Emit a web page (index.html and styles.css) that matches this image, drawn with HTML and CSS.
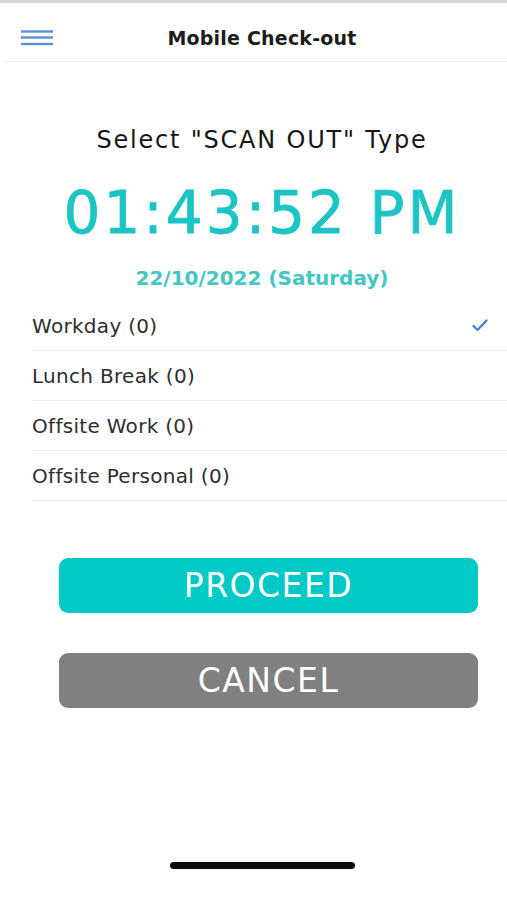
FILE: index.html
```html
<!DOCTYPE html>
<html lang="en">
    <head>
        <meta charset="UTF-8">
        <meta name="viewport" content="width=device-width, initial-scale=1.0">
        <title>Mobile Check-out</title>
        <link rel="stylesheet" href="styles.css">
    </head>
    <body>

        <div class="barraTopo"></div>

        <header class="cabecalho">
            <button type="button" class="menu" aria-label="Menu">
                <svg width="32" height="16" viewBox="0 0 32 16">
                    <line x1="0" y1="1.5" x2="32" y2="1.5" />
                    <line x1="0" y1="7.5" x2="32" y2="7.5" />
                    <line x1="0" y1="14" x2="32" y2="14" />
                </svg>
            </button>
            <h1>Mobile Check-out</h1>
            <span></span>
        </header>

        <div class="conteudo">
            <h2 class="tipo">Select "SCAN OUT" Type</h2>
            <div class="relogio" id="relogio">01:43:52 PM</div>
            <div class="data">22/10/2022 (Saturday)</div>
        </div>

        <ul class="lista">
            <li class="selecionado">
                Workday (0)
                <svg class="check" width="16" height="13" viewBox="0 0 16 13">
                    <polyline points="1.5,7 5.5,11 14.5,1.5" />
                </svg>
            </li>
            <li>Lunch Break (0)</li>
            <li>Offsite Work (0)</li>
            <li>Offsite Personal (0)</li>
        </ul>

        <div class="botoes">
            <button type="button" class="btn btnProceed">PROCEED</button>
            <button type="button" class="btn btnCancel">CANCEL</button>
        </div>

        <div class="home"></div>

    </body>
</html>
```
FILE: styles.css
```css
body {
    margin: 0;
    width: 507px;
    height: 900px;
    background-color: #fff;
    font-family: "DejaVu Sans", "Liberation Sans", sans-serif;
    color: #1e1e1e;
    overflow: hidden;
}

.barraTopo {
    height: 3px;
    background-color: #d6d6d6;
}

.cabecalho {
    display: grid;
    grid-template-columns: 56px 1fr 43px;
    align-items: center;
    height: 47px;
    padding-top: 11px;
    margin-left: 4px;
    border-bottom: 1px solid #ededed;
}

.menu {
    background: none;
    border: none;
    padding: 0 0 0 17px;
    display: flex;
    align-items: center;
    height: 100%;
}

.menu svg line {
    stroke: #5b8fd4;
    stroke-width: 2.4;
}

.cabecalho h1 {
    margin: 0;
    font-size: 19px;
    font-weight: bold;
    text-align: center;
    color: #1c1c1c;
    letter-spacing: 0.2px;
}

.conteudo {
    padding-left: 17px;
    text-align: center;
}

.tipo {
    margin: 63px 0 0;
    font-size: 24px;
    font-weight: normal;
    line-height: 30px;
    letter-spacing: 1.8px;
    color: #161616;
}

.relogio {
    margin-top: 23px;
    font-size: 58px;
    line-height: 70px;
    letter-spacing: 3px;
    color: #1cc5c3;
    -webkit-text-stroke: 0.8px #1cc5c3;
}

.data {
    margin-top: 17px;
    font-size: 20px;
    font-weight: bold;
    line-height: 26px;
    color: #45c5c4;
}

.lista {
    list-style: none;
    margin: 10px 0 0 32px;
    padding: 0;
}

.lista li {
    display: flex;
    align-items: center;
    justify-content: space-between;
    height: 49px;
    padding-right: 19px;
    border-bottom: 1px solid #ececec;
    font-size: 20px;
    letter-spacing: 0.3px;
    color: #2e2e2e;
}

.check polyline {
    fill: none;
    stroke: #3a7fd6;
    stroke-width: 2.2;
    stroke-linecap: round;
    stroke-linejoin: round;
}

.botoes {
    display: flex;
    flex-direction: column;
    gap: 40px;
    margin: 57px 0 0 59px;
    width: 419px;
}

.btn {
    height: 55px;
    border: none;
    border-radius: 9px;
    color: #fff;
    font-family: "DejaVu Sans", "Liberation Sans", sans-serif;
    font-size: 33px;
    letter-spacing: 1.5px;
    padding: 0;
}

.btnProceed {
    background-color: #02c9c6;
}

.btnCancel {
    background-color: #808080;
}

.home {
    width: 185px;
    height: 7px;
    border-radius: 4px;
    background-color: #0a0a0a;
    margin: 154px 0 0 170px;
}
```
